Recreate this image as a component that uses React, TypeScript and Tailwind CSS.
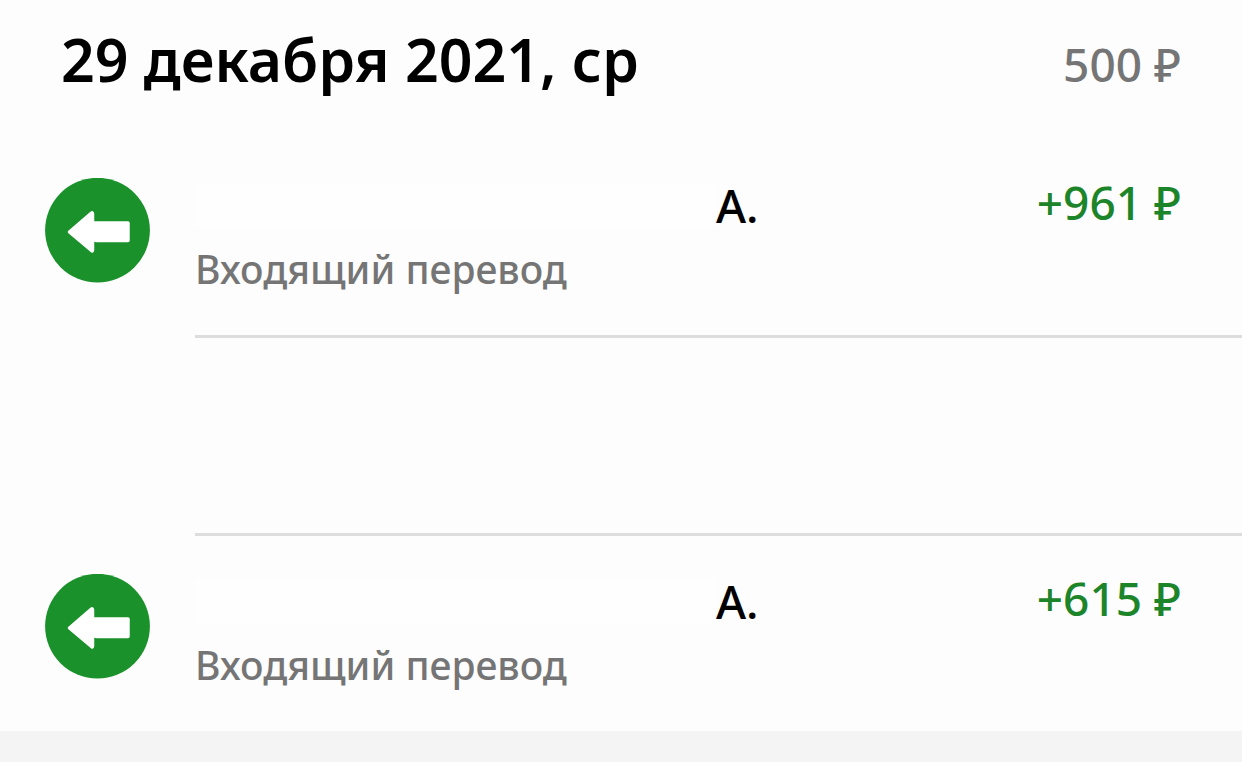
import React from 'react'

type Operation = {
  id: number
  initial: string
  kind: string
  amount: string
} | null

// null is an operation whose details are hidden
const operations: Operation[] = [
  { id: 1, initial: 'А.', kind: 'Входящий перевод', amount: '+961 ₽' },
  null,
  { id: 2, initial: 'А.', kind: 'Входящий перевод', amount: '+615 ₽' },
]

function IncomingIcon() {
  return (
    <svg viewBox="0 0 105 105" className="block size-[105px] shrink-0" aria-hidden="true">
      <circle cx="52.5" cy="52.2" r="52.4" fill="#1a912b" />
      <path
        d="M24.5 54 L46.5 35 Q47.5 34.5 47.5 36 V45 H83 V62.5 H52 Q49 62.5 48.5 60 L47.5 59 V72 Q47.5 73.5 46.5 72.5 Z"
        fill="#fff"
        stroke="#fff"
        strokeWidth="3.5"
        strokeLinejoin="round"
      />
    </svg>
  )
}

function OperationRow({ operation }: { operation: Operation }) {
  return (
    <li className="group flex min-h-[198px] pl-[45px] last:min-h-[195px]">
      <div className="w-[150px] shrink-0 pt-[38px]">{operation && <IncomingIcon />}</div>
      <div className="flex flex-1 items-start justify-between border-b-[3px] border-[#dddddd] pt-[35px] pr-[61px] group-last:border-b-0">
        {operation && (
          <>
            <div>
              <div className="flex text-[46px] leading-[60px] font-medium text-black">
                {/* hidden name */}
                <span className="my-2 w-[521px] bg-[#fefefe]" />
                <span>{operation.initial}</span>
              </div>
              <p className="text-[39px] leading-[68px] font-medium text-[#757575]">{operation.kind}</p>
            </div>
            <p className="text-[46px] leading-[54px] font-medium whitespace-nowrap text-[#1c8429]">
              {operation.amount}
            </p>
          </>
        )}
      </div>
    </li>
  )
}

export default function App() {
  return (
    <div className="min-h-screen bg-[#f4f4f4] font-['Noto_Sans',sans-serif]">
      <section className="bg-[#fdfdfd]">
        <header className="flex h-[140px] items-baseline justify-between pt-[20px] pr-[61px] pl-[61px]">
          <h1 className="text-[59px] leading-[78px] font-semibold text-black">29 декабря 2021, ср</h1>
          <p className="text-[46px] leading-[60px] font-medium whitespace-nowrap text-[#757575]">500 ₽</p>
        </header>
        <ul>
          {operations.map((operation, index) => (
            <OperationRow key={index} operation={operation} />
          ))}
        </ul>
      </section>
    </div>
  )
}
